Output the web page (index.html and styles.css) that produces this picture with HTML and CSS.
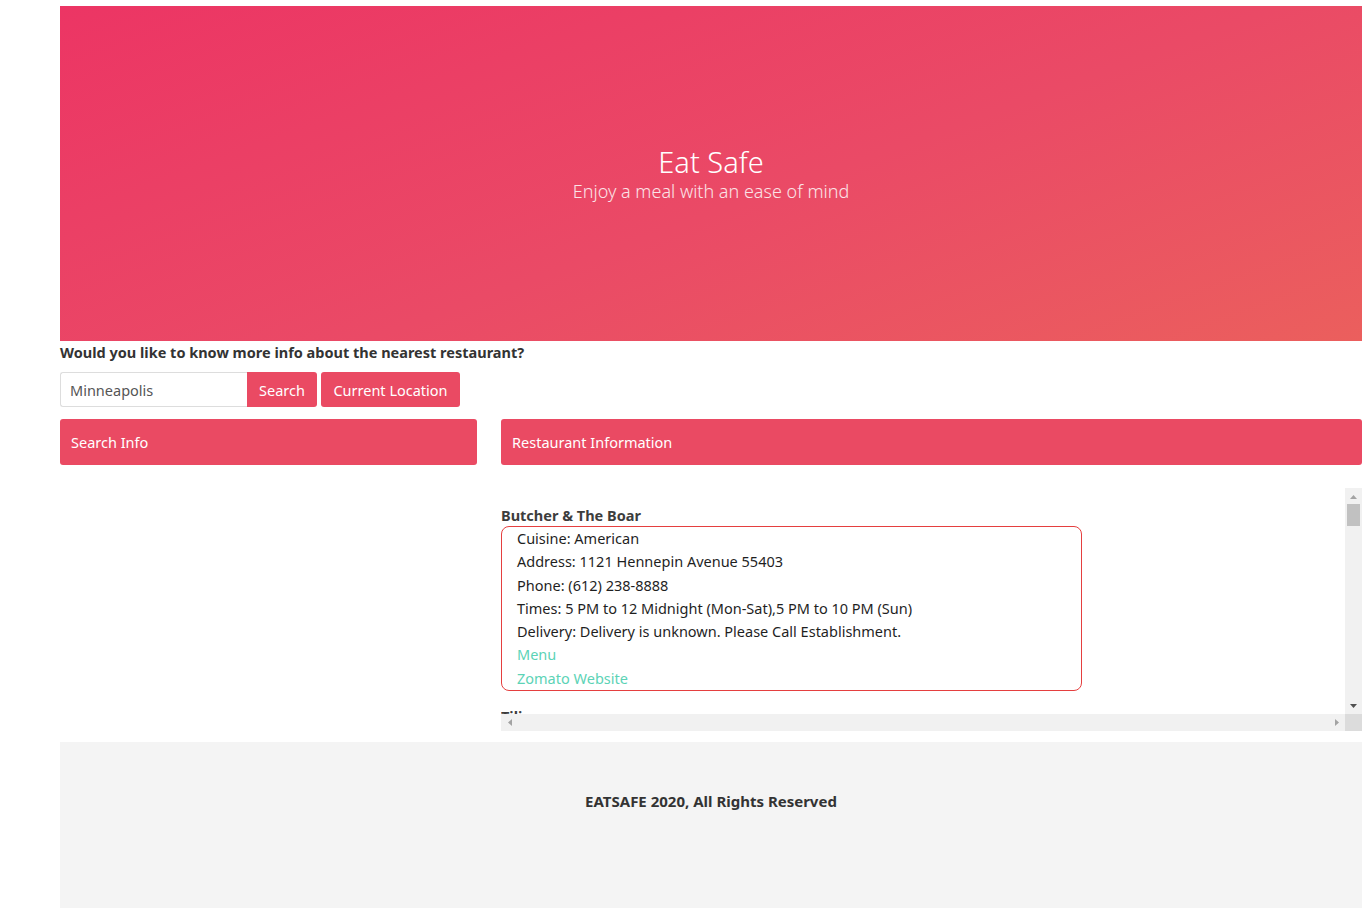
FILE: index.html
```html
<!DOCTYPE html>
<html lang="en">
<head>
<meta charset="utf-8">
<title>Eat Safe</title>
<link rel="stylesheet" href="styles.css">
</head>
<body>
<div class="page">
  <header class="hero">
    <h1 class="hero-title">Eat Safe</h1>
    <p class="hero-sub">Enjoy a meal with an ease of mind</p>
  </header>

  <h2 class="question">Would you like to know more info about the nearest restaurant?</h2>

  <form class="search-row" onsubmit="return false">
    <input class="search-input" type="text" value="Minneapolis">
    <button class="btn btn-attached" type="button">Search</button>
    <button class="btn btn-loc" type="button">Current Location</button>
  </form>

  <div class="columns">
    <section class="col">
      <div class="panel-head">Search Info</div>
    </section>
    <section class="col">
      <div class="panel-head">Restaurant Information</div>
      <div class="results">
        <div class="viewport">
          <div class="rest">
            <h3 class="rest-name">Butcher &amp; The Boar</h3>
            <div class="card">
              <div class="line">Cuisine: American</div>
              <div class="line">Address: 1121 Hennepin Avenue 55403</div>
              <div class="line">Phone: (612) 238-8888</div>
              <div class="line">Times: 5 PM to 12 Midnight (Mon-Sat),5 PM to 10 PM (Sun)</div>
              <div class="line">Delivery: Delivery is unknown. Please Call Establishment.</div>
              <a class="line link" href="#">Menu</a>
              <a class="line link" href="#">Zomato Website</a>
            </div>
          </div>
          <div class="rest">
            <h3 class="rest-name">Tilia</h3>
          </div>
        </div>
        <div class="vbar">
          <span class="sb-btn">
            <svg width="7" height="4" viewBox="0 0 7 4"><polygon points="3.5,0 7,4 0,4" fill="#a3a3a3"/></svg>
          </span>
          <span class="vthumb"></span>
          <span class="sb-fill"></span>
          <span class="sb-btn">
            <svg width="7" height="4" viewBox="0 0 7 4"><polygon points="0,0 7,0 3.5,4" fill="#505050"/></svg>
          </span>
        </div>
        <div class="hbar">
          <span class="sb-btn">
            <svg width="4" height="7" viewBox="0 0 4 7"><polygon points="4,0 4,7 0,3.5" fill="#a3a3a3"/></svg>
          </span>
          <span class="sb-btn">
            <svg width="4" height="7" viewBox="0 0 4 7"><polygon points="0,0 4,3.5 0,7" fill="#a3a3a3"/></svg>
          </span>
        </div>
        <div class="corner"></div>
      </div>
    </section>
  </div>

  <footer class="footer">
    <p class="footer-text">EATSAFE 2020, All Rights Reserved</p>
  </footer>
</div>
</body>
</html>
```

FILE: styles.css
```css
html, body {
  margin: 0;
  padding: 0;
  background: #ffffff;
}

body {
  font-family: "Noto Sans", "Open Sans", sans-serif;
  font-size: 15px;
  color: #333333;
}

.page {
  padding: 6px 8px 0 60px;
}

.hero {
  height: 335px;
  background: linear-gradient(160deg, #ec3564 0%, #ea4a66 55%, #eb5f5d 100%);
  color: #ffffff;
  display: flex;
  flex-direction: column;
  align-items: center;
  justify-content: center;
  text-align: center;
}

.hero-title {
  margin: 0;
  font-size: 29px;
  font-weight: 300;
  line-height: 34px;
}

.hero-sub {
  margin: 0;
  font-size: 18px;
  font-weight: 300;
  line-height: 24px;
  color: #fbe3e7;
}

.question {
  margin: 1px 0 0;
  font-size: 14.5px;
  font-weight: 700;
  line-height: 21px;
  color: #333333;
}

.search-row {
  display: flex;
  margin: 9px 0 0;
  height: 35px;
}

.search-input {
  box-sizing: border-box;
  width: 187px;
  height: 35px;
  margin: 0;
  padding: 0 9px;
  border: 1px solid #dddddd;
  border-right: none;
  border-radius: 3px 0 0 3px;
  font-family: inherit;
  font-size: 14.5px;
  color: #555555;
  outline: none;
}

.btn {
  box-sizing: border-box;
  height: 35px;
  margin: 0;
  padding: 0 12px;
  border: none;
  background: #ea4a63;
  color: #ffffff;
  font-family: inherit;
  font-size: 14.5px;
  border-radius: 3px;
  cursor: pointer;
}

.btn-attached {
  width: 70px;
  border-radius: 0 3px 3px 0;
}

.btn-loc {
  width: 139px;
  margin-left: 4px;
}

.columns {
  display: grid;
  grid-template-columns: 417px 1fr;
  column-gap: 24px;
  margin-top: 12px;
}

.panel-head {
  height: 46px;
  box-sizing: border-box;
  padding: 0 11px;
  display: flex;
  align-items: center;
  background: #ea4a63;
  color: #ffffff;
  border-radius: 3px;
  font-size: 14.5px;
}

.results {
  margin-top: 23px;
  height: 243px;
  display: grid;
  grid-template-columns: 1fr 17px;
  grid-template-rows: 1fr 17px;
}

.viewport {
  overflow: hidden;
  padding-top: 17px;
  min-width: 0;
  min-height: 0;
}

.rest {
  margin-bottom: 15px;
}

.rest-name {
  margin: 0;
  font-size: 14.5px;
  font-weight: 700;
  line-height: 21px;
  color: #3d3d3d;
}

.card {
  width: 581px;
  border: 1px solid #e53f3f;
  border-radius: 8px;
  padding: 0 15px;
  box-sizing: border-box;
}

.line {
  display: block;
  line-height: 23.25px;
  font-size: 14.5px;
  color: #1f1f1f;
  white-space: nowrap;
}

.link {
  color: #5cd3b6;
  text-decoration: none;
}

.vbar {
  background: #f1f1f1;
  display: flex;
  flex-direction: column;
}

.hbar {
  background: #f1f1f1;
  display: flex;
  justify-content: space-between;
}

.sb-btn {
  width: 17px;
  height: 17px;
  flex: 0 0 17px;
  display: flex;
  align-items: center;
  justify-content: center;
}

.sb-btn svg {
  display: block;
}

.vthumb {
  height: 22px;
  margin: -1px 2px 0;
  background: #c1c1c1;
}

.sb-fill {
  flex: 1;
}

.corner {
  background: #dcdcdc;
}

.footer {
  margin-top: 11px;
  height: 180px;
  background: #f4f4f4;
  padding-top: 48px;
  box-sizing: border-box;
}

.footer-text {
  margin: 0;
  text-align: center;
  font-size: 15px;
  font-weight: 700;
  line-height: 22px;
  color: #333333;
}
```
